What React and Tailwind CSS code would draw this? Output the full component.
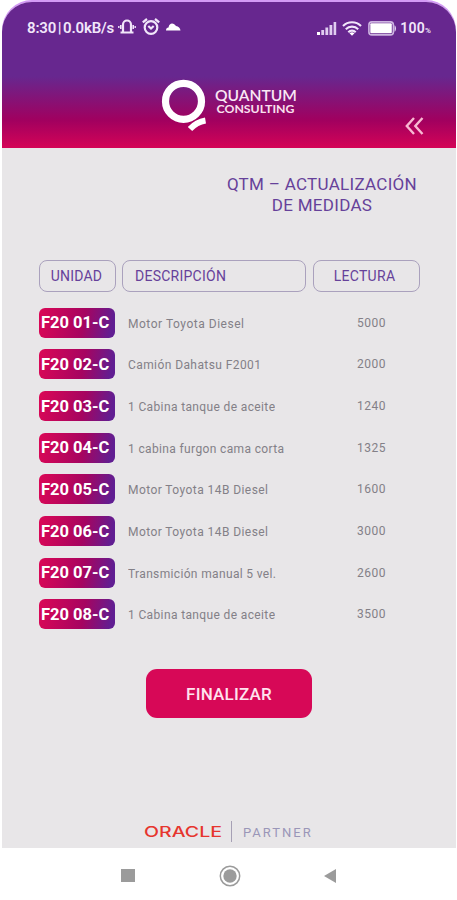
import React from 'react';

const rows = [
  { unit: 'F20 01-C', description: 'Motor Toyota Diesel', reading: '5000', width: 'w-[116px]' },
  { unit: 'F20 02-C', description: 'Camión Dahatsu F2001', reading: '2000', width: 'w-[133px]' },
  { unit: 'F20 03-C', description: '1 Cabina tanque de aceite', reading: '1240', width: 'w-[147px]' },
  { unit: 'F20 04-C', description: '1 cabina furgon cama corta', reading: '1325', width: 'w-[156px]' },
  { unit: 'F20 05-C', description: 'Motor Toyota 14B Diesel', reading: '1600', width: 'w-[140px]' },
  { unit: 'F20 06-C', description: 'Motor Toyota 14B Diesel', reading: '3000', width: 'w-[140px]' },
  { unit: 'F20 07-C', description: 'Transmición manual 5 vel.', reading: '2600', width: 'w-[148px]' },
  { unit: 'F20 08-C', description: '1 Cabina tanque de aceite', reading: '3500', width: 'w-[147px]' },
];

const BellIcon = () => (
  <svg width="18" height="16" viewBox="0 0 18 16" fill="none" stroke="#f1e6fa">
    <path d="M5 13V5.500a4 4 0 0 1 8 0V13" strokeWidth="2.200" />
    <path d="M2.500 13.500h13" strokeWidth="2.200" />
    <path d="M2.800 6v4M15.200 6v4" strokeWidth="1.600" />
    <path d="M0.800 7v2M17.200 7v2" strokeWidth="1.400" />
  </svg>
);

const AlarmIcon = () => (
  <svg width="18" height="18" viewBox="0 0 18 18" fill="none" stroke="#f1e6fa">
    <circle cx="9" cy="9.500" r="6.300" strokeWidth="2.200" />
    <path d="M0.800 4.300l4.200-3.300M17.200 4.300l-4.200-3.300" strokeWidth="2.300" />
    <path d="M6.300 8l2.700 2.500 2.700-2.500" strokeWidth="2.200" />
  </svg>
);

const CloudIcon = () => (
  <svg width="15" height="8" viewBox="0 0 15 8" fill="#fff">
    <path d="M0 7.500c0-2 1-2.800 2.500-3C3 1.500 4.500.500 6 .500c1.700 0 2.800 1 4 2.500 2.500.6 4.200 2 4.500 4.500z" />
  </svg>
);

const SignalIcon = () => (
  <svg width="20" height="13" viewBox="0 0 20 13" fill="#e0cdf0">
    <rect x="0" y="10" width="3" height="3" fill="#fff" />
    <rect x="4.300" y="8" width="2.800" height="5" />
    <rect x="8.400" y="5.500" width="2.800" height="7.500" />
    <rect x="12.500" y="3" width="2.800" height="10" />
    <rect x="16.600" y="0" width="2.600" height="13" />
  </svg>
);

const WifiIcon = () => (
  <svg width="20" height="15" viewBox="0 0 20 15" fill="none" stroke="#f1e6fa" strokeWidth="2.100">
    <path d="M1 5a12.600 12.600 0 0 1 18 0" />
    <path d="M3.800 8.200a8.700 8.700 0 0 1 12.400 0" />
    <path d="M6.300 11.200a5.200 5.200 0 0 1 7.400 0" />
    <path d="M7.500 12.300l2.500 2.500 2.500-2.500a4 4 0 0 0-5 0z" fill="#fff" stroke="none" />
  </svg>
);

const BatteryIcon = () => (
  <svg width="29" height="15" viewBox="0 0 29 15">
    <rect x="0.900" y="0.900" width="24.500" height="13" rx="3" fill="none" stroke="#cdb4e0" strokeWidth="1.600" />
    <rect x="2.300" y="2.300" width="21.500" height="10" rx="1" fill="#fff" />
    <path d="M26.500 4.200c2 .8 2 5.800 0 6.600z" fill="#e0cdf0" />
  </svg>
);

const StatusBar = () => (
  <div className="flex h-[52px] items-center pr-[25px] pl-[25px] text-[15px] font-semibold text-[#f1e6fa]">
    <span className="w-[88px] whitespace-nowrap tracking-[-0.150px] [word-spacing:-2px]">8:30 | 0.0kB/s</span>
    <div className="ml-[3px] -mt-[2px] flex items-center gap-[6px]">
      <BellIcon />
      <AlarmIcon />
      <CloudIcon />
    </div>
    <div className="ml-auto flex items-center">
      <SignalIcon />
      <div className="ml-[5px]"><WifiIcon /></div>
      <div className="ml-[6px]"><BatteryIcon /></div>
      <span className="ml-[3px] text-sm tracking-[0.200px]">100<span className="text-[8px]">%</span></span>
    </div>
  </div>
);

const Logo = () => (
  <svg width="138" height="56" viewBox="0 0 138 56" className="font-['Lato',sans-serif]">
    <circle cx="22.500" cy="23.300" r="18" fill="none" stroke="#fff" strokeWidth="7.200" />
    <path d="M29 51q6.500-7 15.500-8.500" fill="none" stroke="#fff" strokeWidth="6" />
    <text x="54" y="22.500" fontSize="15" fontWeight="600" fill="#fae8f5" textLength="82" lengthAdjust="spacingAndGlyphs">QUANTUM</text>
    <text x="55.500" y="34.500" fontSize="11" fontWeight="700" fill="#fae0ef" textLength="78" lengthAdjust="spacingAndGlyphs">CONSULTING</text>
  </svg>
);

const Header = () => (
  <header className="h-[146px] bg-[linear-gradient(to_bottom,#67278f_0%,#67278f_51%,#a1005f_81%,#d20457_99%)]">
    <StatusBar />
    <div className="flex">
      <div className="ml-[159px] pt-6"><Logo /></div>
      <button className="mt-[63px] mr-[32px] ml-auto h-[18px]" aria-label="Volver">
        <svg width="19" height="18" viewBox="0 0 19 18" fill="none" stroke="#f8b8d2" strokeWidth="2.400">
          <path d="M9 1L1.800 9 9 17M17.500 1l-7.200 8 7.200 8" />
        </svg>
      </button>
    </div>
  </header>
);

const Table = () => (
  <section className="pl-[37px]">
    <div className="flex h-8 gap-[6px] text-[14px] text-[#66419a]">
      <div className="flex w-[77px] items-center justify-center rounded-lg border border-[#aaa1bd] pr-[2px] tracking-[0.200px]">UNIDAD</div>
      <div className="flex w-[184px] items-center rounded-lg border border-[#aaa1bd] pl-3 tracking-[0.250px]">DESCRIPCIÓN</div>
      <div className="ml-px flex w-[107px] items-center justify-center rounded-lg border border-[#aaa1bd] pr-[4px] tracking-[0.300px]">LECTURA</div>
    </div>
    <div className="mt-[15.500px] flex flex-col gap-[11.700px]">
      {rows.map((row) => (
        <div key={row.unit} className="flex h-[30px] items-center">
          <div className="flex h-[30px] w-[76px] items-center rounded-[6px] bg-[linear-gradient(100deg,#db0856_0%,#a60460_58%,#611e92_94%)] pt-[2px] pl-[2px] text-[16.500px] font-bold whitespace-nowrap text-white">
            {row.unit}
          </div>
          <svg className={`ml-[13px] h-5 shrink-0 ${row.width}`}>
            <text x="0" y="14.500" fontSize="12" fill="#838087" textLength="100%" lengthAdjust="spacing">{row.description}</text>
          </svg>
          <span className="mr-[70px] ml-auto w-[29px] text-center text-[12px] tracking-[0.500px] text-[#838087]">{row.reading}</span>
        </div>
      ))}
    </div>
  </section>
);

const Partner = () => (
  <div className="mt-[102px] ml-[140px] flex h-[23px] items-center">
    <svg width="83" height="20" viewBox="0 0 83 20" className="font-['Inter',sans-serif]">
      <text x="2" y="15.500" fontSize="14" fontWeight="500" fill="#e6352e" textLength="78" lengthAdjust="spacingAndGlyphs">ORACLE</text>
    </svg>
    <div className="ml-[6px] h-[21px] w-px bg-[#a6a0b5]" />
    <span className="ml-[11px] pt-[2px] text-[13px] tracking-[2px] text-[#9a96b8]">PARTNER</span>
  </div>
);

const NavBar = () => (
  <nav className="flex h-[52px] items-center bg-white pt-[3px] pl-[119px]">
    <div className="h-[13px] w-[14px] bg-[#9b9b9b]" />
    <svg className="ml-[84px]" width="22" height="22" viewBox="0 0 22 22">
      <circle cx="11" cy="11" r="9.700" fill="none" stroke="#9b9b9b" strokeWidth="1.500" />
      <circle cx="11" cy="11" r="6.700" fill="#9b9b9b" />
    </svg>
    <svg className="ml-[83px]" width="13" height="14" viewBox="0 0 13 14">
      <path d="M0 7l12-7v14z" fill="#9b9b9b" />
    </svg>
  </nav>
);

const App = () => {
  return (
    <div className="h-[900px] w-[457px] bg-white pt-[2px] pl-[2px] font-['Roboto',sans-serif]">
      <div className="h-[846px] w-[454px] overflow-hidden rounded-t-[30px] bg-[#e8e6e8] shadow-[0_-2px_0_#d39af5]">
        <Header />
        <h1 className="mt-[26px] ml-[220px] w-[200px] text-center text-[17px] leading-[21px] tracking-[0.300px] text-[#66419a]">
          QTM – ACTUALIZACIÓN<br />DE MEDIDAS
        </h1>
        <div className="mt-[44px]"><Table /></div>
        <button className="mt-[39.500px] ml-[144px] h-[49px] w-[166px] rounded-[11px] bg-[#d70857] pt-[2px] text-[17px] font-medium tracking-[0.200px] text-[#ffe3ee]">
          FINALIZAR
        </button>
        <Partner />
      </div>
      <NavBar />
    </div>
  );
};

export default App;
